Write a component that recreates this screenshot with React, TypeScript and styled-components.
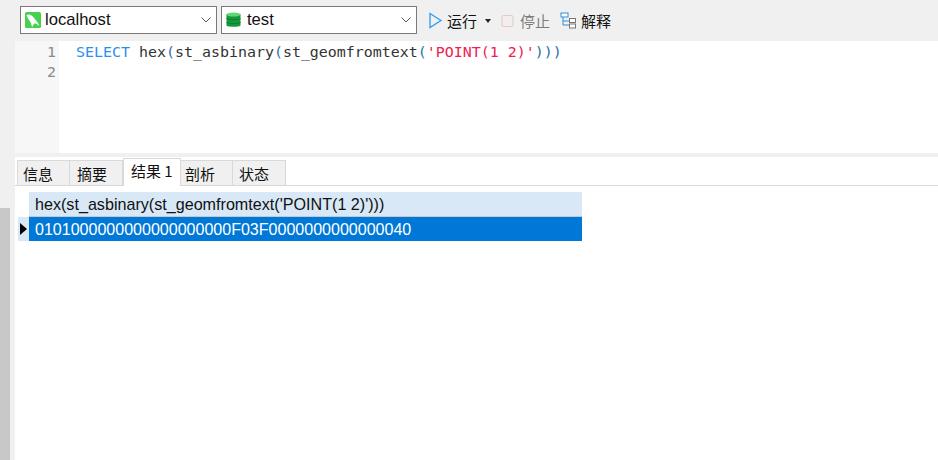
import React from "react";
import styled, { createGlobalStyle } from "styled-components";

const Global = createGlobalStyle`
  html, body { margin: 0; padding: 0; width: 938px; height: 460px; overflow: hidden; background: #f0f0f0; }
  body { font-family: "Liberation Sans", "Noto Sans CJK SC", sans-serif; }
`;

const Page = styled.div`
  width: 938px; height: 460px; display: flex; flex-direction: column; background: #f0f0f0; overflow: hidden;
`;
const Toolbar = styled.div`
  height: 41px; flex: none; display: flex; align-items: flex-start; padding: 6px 0 0 20px; box-sizing: border-box;
`;
const Select = styled.div<{ $w: number }>`
  width: ${p => p.$w}px; height: 28px; box-sizing: border-box; margin-right: 4px; border: 1px solid #7a7a7a; background: #fff;
  display: flex; align-items: center; padding-left: 4px; gap: 4px; font-size: 16.6px; color: #111;
`;
const SelectLabel = styled.span`flex: 1;`;
const Chevron = styled.svg`width: 10px; height: 6px; margin-right: 5px; flex: none;`;
const ToolButton = styled.div<{ $ml: number; $gap: number; $muted?: boolean }>`
  margin-left: ${p => p.$ml}px; height: 29px; display: flex; align-items: center; gap: ${p => p.$gap}px;
  font-family: "Noto Sans CJK SC", sans-serif; font-size: 15px; color: ${p => (p.$muted ? "#7d7d7d" : "#111")};
`;
const Caret = styled.svg`margin-left: 4px; flex: none;`;
const Main = styled.div`flex: 1; display: flex; min-height: 0;`;
const Rail = styled.div`width: 15px; flex: none; display: flex; flex-direction: column;`;
const RailSpace = styled.div`height: 167px; flex: none;`;
const RailThumb = styled.div`width: 10px; flex: 1; background: #c8c8c8;`;
const Content = styled.div`flex: 1; display: flex; flex-direction: column; min-width: 0;`;
const Editor = styled.div`
  height: 112px; flex: none; display: flex; background: #fff;
  font-family: "DejaVu Sans Mono", monospace; font-size: 14.94px; line-height: 20px;
`;
const Gutter = styled.div`
  width: 44px; flex: none; box-sizing: border-box; padding: 1px 3px 0 0; text-align: right; background: #f7f7f7; color: #8a8a8a;
`;
const Code = styled.div`padding: 1px 0 0 17px; color: #333; white-space: pre;`;
const Keyword = styled.span`color: #2a90f0;`;
const Str = styled.span`color: #f0204f;`;
const Paren = styled.span`color: #2f6fa8;`;
const Divider = styled.div`height: 4px; flex: none; background: #f0f0f0;`;
const Results = styled.div`flex: 1; background: #fff; display: flex; flex-direction: column;`;
const Tabs = styled.div`
  height: 29px; flex: none; box-sizing: border-box; border-bottom: 1px solid #d9d9d9; display: flex; align-items: flex-end; padding-left: 2px;
`;
const Tab = styled.div<{ $w: number; $pad: number; $active?: boolean }>`
  width: ${p => p.$w}px; box-sizing: border-box; flex: none;
  height: ${p => (p.$active ? 28 : 25)}px; margin-bottom: ${p => (p.$active ? -1 : 0)}px;
  background: ${p => (p.$active ? "#fff" : "#f0f0f0")};
  border: 1px solid #d9d9d9; border-bottom: 0; border-left-width: ${p => (p.$active ? 1 : 0)}px;
  padding: ${p => (p.$active ? 2 : 3)}px 0 0 ${p => p.$pad}px;
  font-family: "Noto Sans CJK SC", sans-serif; font-size: 15px; line-height: 20px; color: #111; white-space: nowrap;
  &:first-child { border-left-width: 1px; }
`;
const Grid = styled.div`padding: 6px 0 0 3px; display: grid; grid-template-columns: 11px 553px; grid-template-rows: 25px 24px; width: max-content;`;
const Corner = styled.div`background: #fff;`;
const HeaderCell = styled.div`
  background: #d8e8f6; border-bottom: 1px solid #c8c8c8; box-sizing: border-box; padding: 1px 0 0 6px;
  font-size: 16.14px; line-height: 23px; color: #111; white-space: nowrap;
`;
const RowMark = styled.div`background: #d8e8f6; display: flex; align-items: center; justify-content: center;`;
const RowCell = styled.div`
  background: #0078d7; color: #fff; padding: 1px 0 0 6px; font-size: 16.04px; line-height: 23px; white-space: nowrap;
`;

const ChevronIcon = () => (
  <Chevron viewBox="0 0 10 6"><path d="M0.5 0.5 L5 5 L9.5 0.5" fill="none" stroke="#555" strokeWidth="1" /></Chevron>
);

export default function App() {
  return (
    <Page>
      <Global />
      <Toolbar>
        <Select $w={197}>
          <svg width="16" height="16" viewBox="0 0 16 16">
            <rect width="16" height="16" rx="1.5" fill="#45d24f" />
            <path d="M1.5 3 C4 1.5 7 3 9 6 C11 8.5 13 10 14.5 14 C12 12 10.5 11.5 9 11.5 C8.5 13 8 14 7 15 C6.5 12.5 5.5 10 4 8 C3.2 6.8 2.2 5 1.5 3Z" fill="#fff" />
          </svg>
          <SelectLabel>localhost</SelectLabel>
          <ChevronIcon />
        </Select>
        <Select $w={196}>
          <svg width="15" height="16" viewBox="0 0 15 16" style={{ marginRight: 2 }}>
            <path d="M0.5 2.5 C0.5 0.8 14.5 0.8 14.5 2.5 V13.5 C14.5 15.2 0.5 15.2 0.5 13.5Z" fill="#149a3d" />
            <ellipse cx="7.5" cy="2.6" rx="7" ry="2" fill="#5fd873" />
            <path d="M0.5 6.5 C3 8 12 8 14.5 6.5 M0.5 10.5 C3 12 12 12 14.5 10.5" fill="none" stroke="#0d7d30" strokeWidth="1" />
          </svg>
          <SelectLabel>test</SelectLabel>
          <ChevronIcon />
        </Select>
        <ToolButton $ml={7} $gap={4}>
          <svg width="15" height="17" viewBox="0 0 15 17">
            <path d="M2 1.5 L13 8.5 L2 15.5Z" fill="none" stroke="#2f9bf0" strokeWidth="1.3" />
          </svg>
          <span>运行</span>
          <Caret width="6" height="4" viewBox="0 0 6 4"><path d="M0 0 H6 L3 4Z" fill="#222" /></Caret>
        </ToolButton>
        <ToolButton $ml={10} $gap={6} $muted>
          <svg width="13" height="14" viewBox="0 0 13 14">
            <rect x="1" y="1.5" width="11" height="11" rx="1.5" fill="#f3eeee" stroke="#e3c8c8" strokeWidth="1" />
          </svg>
          <span>停止</span>
        </ToolButton>
        <ToolButton $ml={10} $gap={4}>
          <svg width="17" height="18" viewBox="0 0 17 18">
            <rect x="1" y="1" width="7" height="4" fill="#fff" stroke="#2f8fe0" />
            <path d="M3 5 V13 H9 M3 9 H9" fill="none" stroke="#2f8fe0" />
            <rect x="9.5" y="6.5" width="6" height="4" fill="#fff" stroke="#777" />
            <rect x="9.5" y="12" width="6" height="4" fill="#fff" stroke="#777" />
          </svg>
          <span>解释</span>
        </ToolButton>
      </Toolbar>
      <Main>
        <Rail>
          <RailSpace />
          <RailThumb />
        </Rail>
        <Content>
          <Editor>
            <Gutter>1<br />2</Gutter>
            <Code>
              <Keyword>SELECT</Keyword> hex<Paren>(</Paren>st_asbinary<Paren>(</Paren>st_geomfromtext<Paren>(</Paren>
              <Str>'POINT(1 2)'</Str><Paren>)))</Paren>
            </Code>
          </Editor>
          <Divider />
          <Results>
            <Tabs>
              <Tab $w={53} $pad={5}>信息</Tab>
              <Tab $w={53} $pad={7}>摘要</Tab>
              <Tab $w={58} $pad={7} $active>结果 1</Tab>
              <Tab $w={52} $pad={4}>剖析</Tab>
              <Tab $w={53} $pad={6}>状态</Tab>
            </Tabs>
            <Grid>
              <Corner />
              <HeaderCell>hex(st_asbinary(st_geomfromtext('POINT(1 2)')))</HeaderCell>
              <RowMark>
                <svg width="7" height="12" viewBox="0 0 7 12"><path d="M0 0 L7 6 L0 12Z" fill="#000" /></svg>
              </RowMark>
              <RowCell>0101000000000000000000F03F0000000000000040</RowCell>
            </Grid>
          </Results>
        </Content>
      </Main>
    </Page>
  );
}
